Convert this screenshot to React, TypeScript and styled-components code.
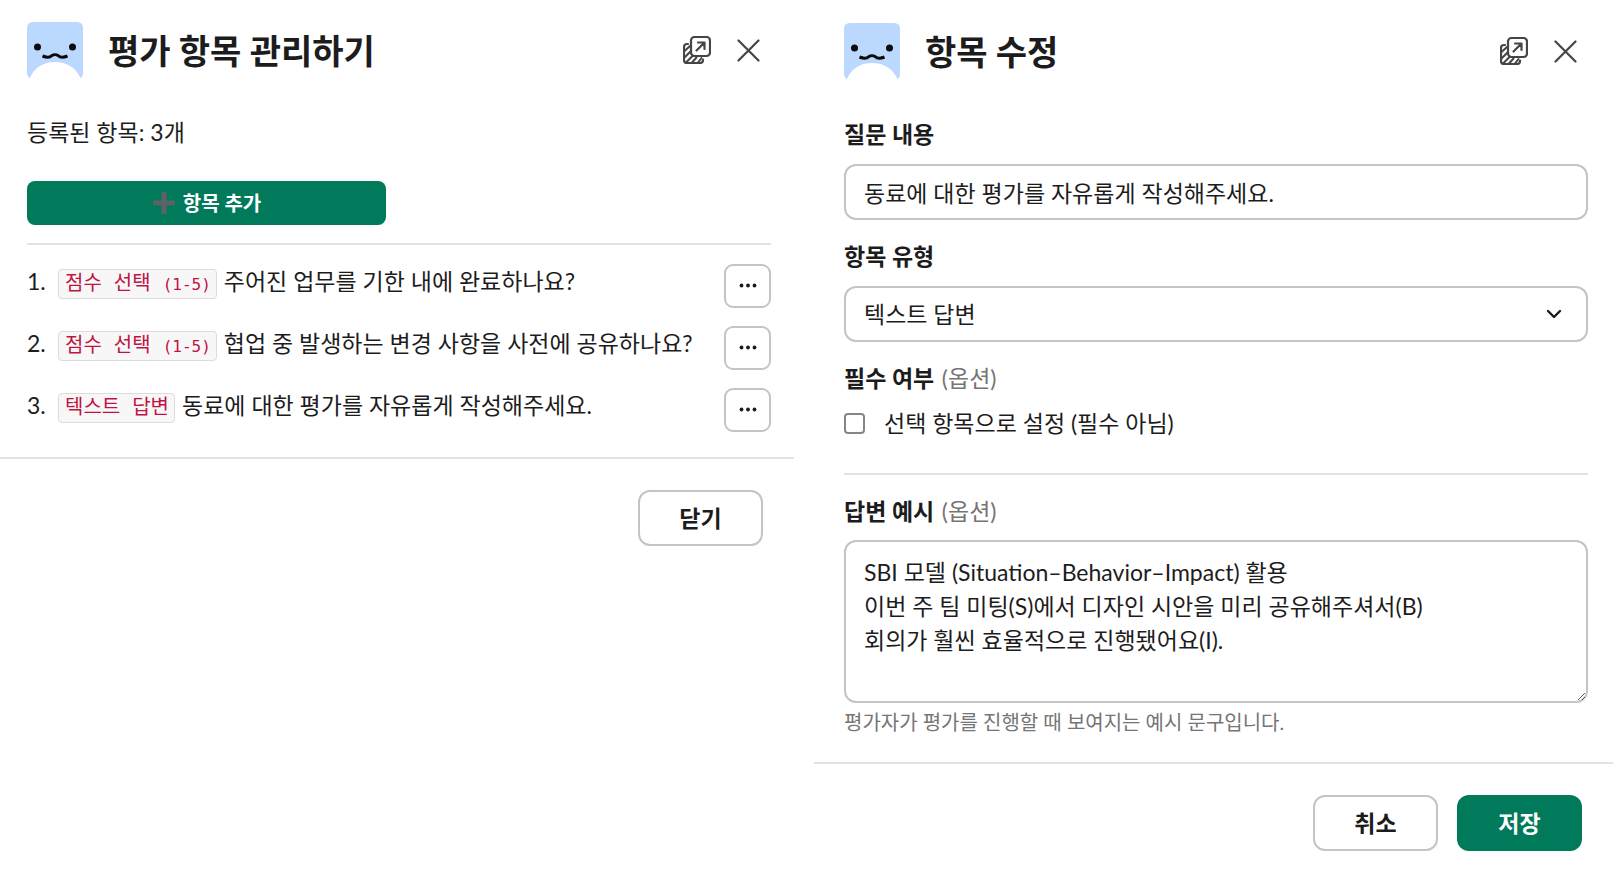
import React from "react";
import styled, { createGlobalStyle } from "styled-components";

const GlobalStyle = createGlobalStyle`
  *, *::before, *::after { box-sizing: border-box; }
  body {
    margin: 0;
    background: #fff;
    color: #1d1c1d;
    font-family: Lato, "Noto Sans CJK KR", sans-serif;
    font-size: 23px;
    line-height: 34px;
  }
  button, input, select, textarea { font: inherit; color: inherit; margin: 0; }
`;

const Page = styled.main`
  display: grid;
  grid-template-columns: minmax(0, 794fr) minmax(0, 799fr);
  column-gap: 20px;
  align-items: start;
`;

const Dialog = styled.section`
  display: flex;
  flex-direction: column;
`;

const Header = styled.header<{ $side: "left" | "right" }>`
  display: flex;
  align-items: center;
  padding: ${(p) => (p.$side === "left" ? "22px 34px 0 27px" : "23px 36px 0 30px")};
`;

const Title = styled.h1`
  flex: 1;
  margin: 0 0 0 25px;
  padding-top: 2px;
  font-size: 34px;
  line-height: 54px;
  font-weight: 700;
`;

const IconButton = styled.button`
  display: flex;
  padding: 0;
  border: 0;
  background: none;
  margin-left: 26px;
  color: #454447;
  cursor: pointer;
`;

const Body = styled.div<{ $side: "left" | "right" }>`
  display: flex;
  flex-direction: column;
  padding: ${(p) => (p.$side === "left" ? "37px 23px 25px 27px" : "38px 25px 25px 30px")};
`;

const Footer = styled.footer`
  display: flex;
  justify-content: flex-end;
  gap: 19px;
  padding: 31px 31px 20px;
  border-top: 2px solid #e2e2e2;
`;

const Button = styled.button<{ $primary?: boolean }>`
  width: 125px;
  height: 56px;
  padding: 0;
  border: ${(p) => (p.$primary ? "0" : "2px solid #c4c4c4")};
  border-radius: 12px;
  background: ${(p) => (p.$primary ? "#007a5a" : "#fff")};
  color: ${(p) => (p.$primary ? "#fff" : "#1d1c1d")};
  font-weight: 700;
  cursor: pointer;
`;

const Count = styled.p`
  margin: 0;
`;

const AddButton = styled.button`
  display: flex;
  align-items: center;
  justify-content: center;
  gap: 7px;
  width: 359px;
  max-width: 100%;
  height: 44px;
  margin: 32px 0 18px;
  padding: 0;
  border: 0;
  border-radius: 8px;
  background: #007a5a;
  color: #fff;
  font-size: 20px;
  font-weight: 700;
  cursor: pointer;
`;

const Divider = styled.hr`
  width: 100%;
  height: 2px;
  margin: 0;
  border: 0;
  background: #e2e2e2;
`;

const List = styled.ol`
  display: flex;
  flex-direction: column;
  gap: 18px;
  margin: 0;
  padding: 19px 0 0;
  list-style: none;
`;

const Item = styled.li`
  display: flex;
  align-items: flex-start;
`;

const Order = styled.span`
  width: 31px;
`;

const Tag = styled.code`
  height: 30px;
  margin: 5px 7px 0 0;
  padding: 2px 5px 0 6px;
  border: 1px solid #dcdcdc;
  border-radius: 4px;
  background: #f7f7f7;
  color: #c01343;
  font-family: "Liberation Mono", "Noto Sans CJK KR", monospace;
  font-size: 20px;
  line-height: 26px;
  white-space: pre;
`;

const Range = styled.span`
  font-family: "DejaVu Sans Mono", monospace;
  font-size: 16px;
`;

const Question = styled.span`
  flex: 1;
  min-width: 0;
`;

const MoreButton = styled.button`
  display: flex;
  align-items: center;
  justify-content: center;
  width: 47px;
  height: 44px;
  padding: 0;
  border: 2px solid #c4c4c4;
  border-radius: 9px;
  background: #fff;
  cursor: pointer;
`;

const Label = styled.label`
  font-weight: 700;
`;

const Group = styled.fieldset`
  display: flex;
  flex-direction: column;
  margin: 0;
  padding: 0;
  border: 0;
  min-width: 0;
`;

const Legend = styled.legend`
  padding: 0;
  font-weight: 700;
`;

const Optional = styled.span`
  margin-left: 2px;
  color: #757575;
  font-weight: 400;
`;

const TextInput = styled.input`
  width: 100%;
  height: 56px;
  margin: 13px 0 19px;
  padding: 0 18px;
  border: 2px solid #c4c4c4;
  border-radius: 12px;
  background: #fff;
`;

const SelectWrap = styled.div`
  position: relative;
  margin: 13px 0 19px;
`;

const Select = styled.select`
  display: block;
  width: 100%;
  height: 56px;
  padding: 0 60px 0 18px;
  border: 2px solid #c4c4c4;
  border-radius: 12px;
  background: #fff;
  appearance: none;
`;

const Chevron = styled.svg`
  position: absolute;
  top: 20px;
  right: 26px;
  pointer-events: none;
`;

const CheckRow = styled.label`
  display: flex;
  align-items: center;
  gap: 19px;
  margin: 11px 0 33px;
`;

const Checkbox = styled.input`
  width: 21px;
  height: 21px;
  border: 2px solid #868686;
  border-radius: 4px;
  background: #fff;
  appearance: none;

  &:checked { background: #007a5a; }
`;

const ExampleLabel = styled(Label)`
  margin-top: 19px;
`;

const TextArea = styled.textarea`
  display: block;
  width: 100%;
  height: 163px;
  margin: 12px 0 4px;
  padding: 13px 18px;
  border: 2px solid #c4c4c4;
  border-radius: 12px;
  background: #fff;
  resize: vertical;
`;

const Hint = styled.p`
  margin: 0;
  color: #757575;
  font-size: 20px;
  line-height: 30px;
`;

const Avatar = () => (
  <svg width="56" height="56" viewBox="0 0 56 56" role="img" aria-label="앱 아이콘">
    <path d="M6 0H50Q56 0 56 6V51Q56 55 53.500 56C49 46 40 40 28 40S7 46 3 56Q0 55 0 51V6Q0 0 6 0Z" fill="#bbd9ff" />
    <circle cx="10.5" cy="25" r="3.500" fill="#0b0b0b" />
    <circle cx="45.5" cy="25" r="3.500" fill="#0b0b0b" />
    <path d="M15.500 34C19 35.500 23 35.500 25 33.500C26.500 32.500 29.500 32.500 31 33.500C33 35.500 37 35.500 40.500 34" fill="none" stroke="#0b0b0b" strokeWidth="3" />
  </svg>
);

const PopOutIcon = () => (
  <svg width="28" height="28" viewBox="0 0 28 28" fill="none" stroke="currentColor" strokeWidth="2.200" strokeLinecap="round" strokeLinejoin="round">
    <rect x="8" y="1" width="19" height="19" rx="3.500" />
    <path d="M13.500 14.500L21 7M15 6.500h6.500v6.500" />
    <path d="M5 8H4Q1 8 1 11V24Q1 27 4 27H17Q20 27 20 24V23.500" />
    <path d="M1.500 15L7 10M1.500 21.500L7.500 15.500M3 26.500L9.500 20M9 26.500L13.500 21.500M15 26.500L18.500 22" strokeWidth="2" />
  </svg>
);

const CloseIcon = () => (
  <svg width="23" height="23" viewBox="0 0 23 23" fill="none" stroke="currentColor" strokeWidth="2.200" strokeLinecap="round">
    <path d="M1.500 1.500L21.500 21.500M21.500 1.500L1.500 21.500" />
  </svg>
);

const PlusIcon = () => (
  <svg width="24" height="24" viewBox="0 0 24 24" fill="#5d6266" aria-hidden="true">
    <path d="M10.500 1h3q1 0 1 1v7.500H22q1 0 1 1v3q0 1-1 1h-7.500V22q0 1-1 1h-3q-1 0-1-1v-7.500H2q-1 0-1-1v-3q0-1 1-1h7.500V2q0-1 1-1Z" />
  </svg>
);

const DotsIcon = () => (
  <svg width="18" height="6" viewBox="0 0 18 6" fill="#1d1c1d" aria-hidden="true">
    <circle cx="2.500" cy="2.500" r="1.900" />
    <circle cx="9" cy="2.500" r="1.900" />
    <circle cx="15.500" cy="2.500" r="1.900" />
  </svg>
);

const DialogHeader = ({ title, side }: { title: string; side: "left" | "right" }) => (
  <Header $side={side}>
    <Avatar />
    <Title>{title}</Title>
    <IconButton type="button" aria-label="새 창에서 열기"><PopOutIcon /></IconButton>
    <IconButton type="button" aria-label="닫기"><CloseIcon /></IconButton>
  </Header>
);

const items = [
  { type: "점수 선택", range: "(1-5)", question: "주어진 업무를 기한 내에 완료하나요?" },
  { type: "점수 선택", range: "(1-5)", question: "협업 중 발생하는 변경 사항을 사전에 공유하나요?" },
  { type: "텍스트 답변", range: "", question: "동료에 대한 평가를 자유롭게 작성해주세요." },
];

const example = `SBI 모델 (Situation–Behavior–Impact) 활용
이번 주 팀 미팅(S)에서 디자인 시안을 미리 공유해주셔서(B)
회의가 훨씬 효율적으로 진행됐어요(I).`;

export default function App() {
  return (
    <>
      <GlobalStyle />
      <Page>
        <Dialog>
          <DialogHeader title="평가 항목 관리하기" side="left" />
          <Body $side="left">
            <Count>등록된 항목: 3개</Count>
            <AddButton type="button"><PlusIcon />항목 추가</AddButton>
            <Divider />
            <List>
              {items.map((item, i) => (
                <Item key={item.question}>
                  <Order>{i + 1}.</Order>
                  <Tag>
                    {item.type}
                    {item.range && <> <Range>{item.range}</Range></>}
                  </Tag>
                  <Question>{item.question}</Question>
                  <MoreButton type="button" aria-label="더 보기"><DotsIcon /></MoreButton>
                </Item>
              ))}
            </List>
          </Body>
          <Footer>
            <Button type="button">닫기</Button>
          </Footer>
        </Dialog>

        <Dialog>
          <DialogHeader title="항목 수정" side="right" />
          <Body $side="right">
            <Label htmlFor="question">질문 내용</Label>
            <TextInput id="question" type="text" defaultValue="동료에 대한 평가를 자유롭게 작성해주세요." />
            <Label htmlFor="kind">항목 유형</Label>
            <SelectWrap>
              <Select id="kind" defaultValue="text">
                <option value="text">텍스트 답변</option>
                <option value="score">점수 선택 (1-5)</option>
              </Select>
              <Chevron width="16" height="16" viewBox="0 0 16 16" fill="none" stroke="#1d1c1d" strokeWidth="2.400" strokeLinecap="round" strokeLinejoin="round">
                <path d="M2 5L8 11L14 5" />
              </Chevron>
            </SelectWrap>
            <Group>
              <Legend>필수 여부 <Optional>(옵션)</Optional></Legend>
              <CheckRow>
                <Checkbox type="checkbox" />
                선택 항목으로 설정 (필수 아님)
              </CheckRow>
            </Group>
            <Divider />
            <ExampleLabel htmlFor="example">답변 예시 <Optional>(옵션)</Optional></ExampleLabel>
            <TextArea id="example" defaultValue={example} />
            <Hint>평가자가 평가를 진행할 때 보여지는 예시 문구입니다.</Hint>
          </Body>
          <Footer>
            <Button type="button">취소</Button>
            <Button type="button" $primary>저장</Button>
          </Footer>
        </Dialog>
      </Page>
    </>
  );
}
